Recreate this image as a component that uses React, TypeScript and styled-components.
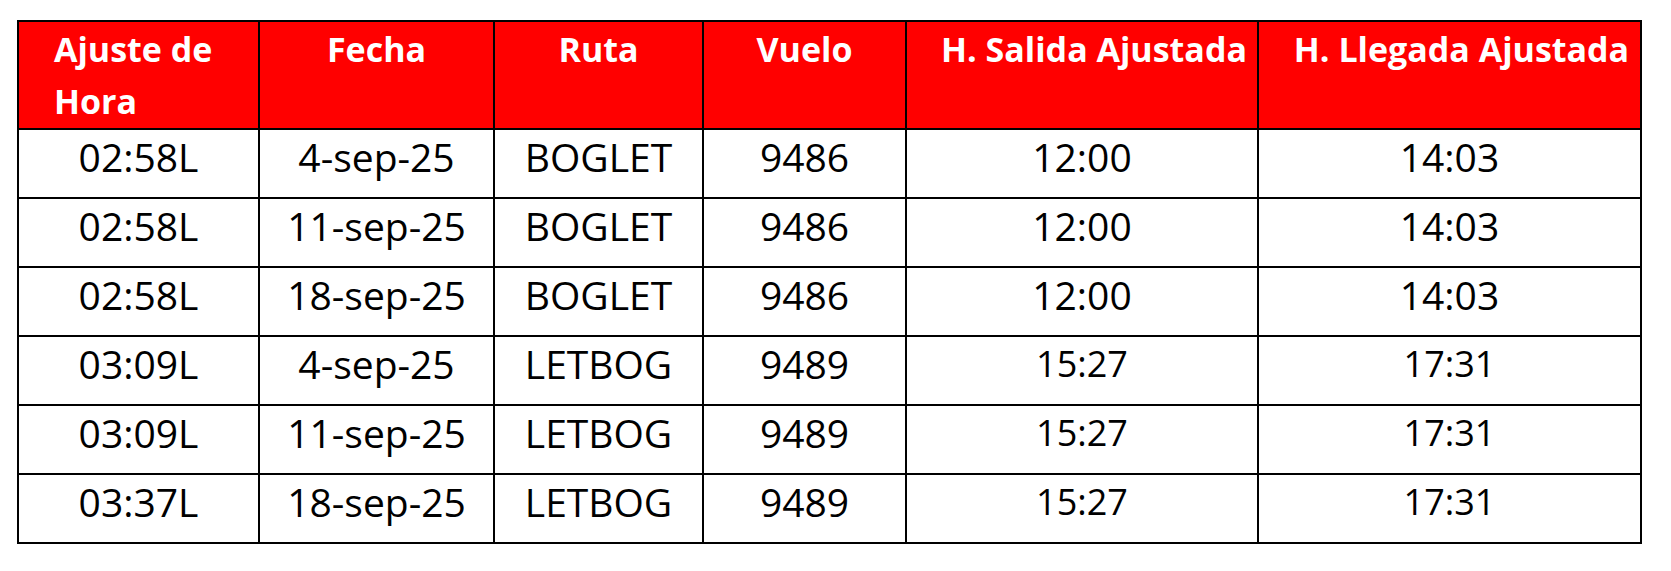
import React from "react";
import styled, { createGlobalStyle } from "styled-components";

const GlobalStyle = createGlobalStyle`
  html, body {
    margin: 0;
    padding: 0;
    background: #ffffff;
  }
  body {
    font-family: "Open Sans", "Noto Sans", sans-serif;
    color: #000000;
  }
`;

const Page = styled.div`
  padding: 20px 0 0 17px;
`;

const Table = styled.table`
  border-collapse: collapse;
  table-layout: fixed;
  width: 1625px;
  border: 2px solid #000;
`;

const HeadCell = styled.th<{ $align?: "left" | "center"; $shift?: number }>`
  background: #ff0000;
  color: #ffffff;
  font-weight: 700;
  font-size: 34px;
  line-height: 52px;
  height: 105px;
  padding: 1px 0 0 ${(p) => p.$shift ?? 0}px;
  text-align: ${(p) => p.$align ?? "center"};
  vertical-align: top;
  white-space: nowrap;
  border: 2px solid #000;
`;

const Cell = styled.td<{ $small?: boolean }>`
  font-size: ${(p) => (p.$small ? 36 : 39)}px;
  line-height: ${(p) => (p.$small ? 1.5 : 1.362)};
  height: 67px;
  padding: 0;
  text-align: center;
  vertical-align: top;
  border: 2px solid #000;
  white-space: nowrap;
`;

const BodyRow = styled.tr``;

type Flight = {
  ajuste: string;
  fecha: string;
  ruta: string;
  vuelo: string;
  salida: string;
  llegada: string;
  small?: boolean;
};

const flights: Flight[] = [
  { ajuste: "02:58L", fecha: "4-sep-25", ruta: "BOGLET", vuelo: "9486", salida: "12:00", llegada: "14:03" },
  { ajuste: "02:58L", fecha: "11-sep-25", ruta: "BOGLET", vuelo: "9486", salida: "12:00", llegada: "14:03" },
  { ajuste: "02:58L", fecha: "18-sep-25", ruta: "BOGLET", vuelo: "9486", salida: "12:00", llegada: "14:03" },
  { ajuste: "03:09L", fecha: "4-sep-25", ruta: "LETBOG", vuelo: "9489", salida: "15:27", llegada: "17:31", small: true },
  { ajuste: "03:09L", fecha: "11-sep-25", ruta: "LETBOG", vuelo: "9489", salida: "15:27", llegada: "17:31", small: true },
  { ajuste: "03:37L", fecha: "18-sep-25", ruta: "LETBOG", vuelo: "9489", salida: "15:27", llegada: "17:31", small: true },
];

export default function App() {
  return (
    <Page>
      <GlobalStyle />
      <Table>
        <colgroup>
          <col style={{ width: 241 }} />
          <col style={{ width: 235 }} />
          <col style={{ width: 209 }} />
          <col style={{ width: 203 }} />
          <col style={{ width: 352 }} />
          <col style={{ width: 383 }} />
        </colgroup>
        <thead>
          <tr>
            <HeadCell $align="left" $shift={35}>
              Ajuste de
              <br />
              Hora
            </HeadCell>
            <HeadCell>Fecha</HeadCell>
            <HeadCell>Ruta</HeadCell>
            <HeadCell>Vuelo</HeadCell>
            <HeadCell $shift={24}>H. Salida Ajustada</HeadCell>
            <HeadCell $shift={24}>H. Llegada Ajustada</HeadCell>
          </tr>
        </thead>
        <tbody>
          {flights.map((f, i) => (
            <BodyRow key={i}>
              <Cell>{f.ajuste}</Cell>
              <Cell>{f.fecha}</Cell>
              <Cell>{f.ruta}</Cell>
              <Cell>{f.vuelo}</Cell>
              <Cell $small={f.small}>{f.salida}</Cell>
              <Cell $small={f.small}>{f.llegada}</Cell>
            </BodyRow>
          ))}
        </tbody>
      </Table>
    </Page>
  );
}
